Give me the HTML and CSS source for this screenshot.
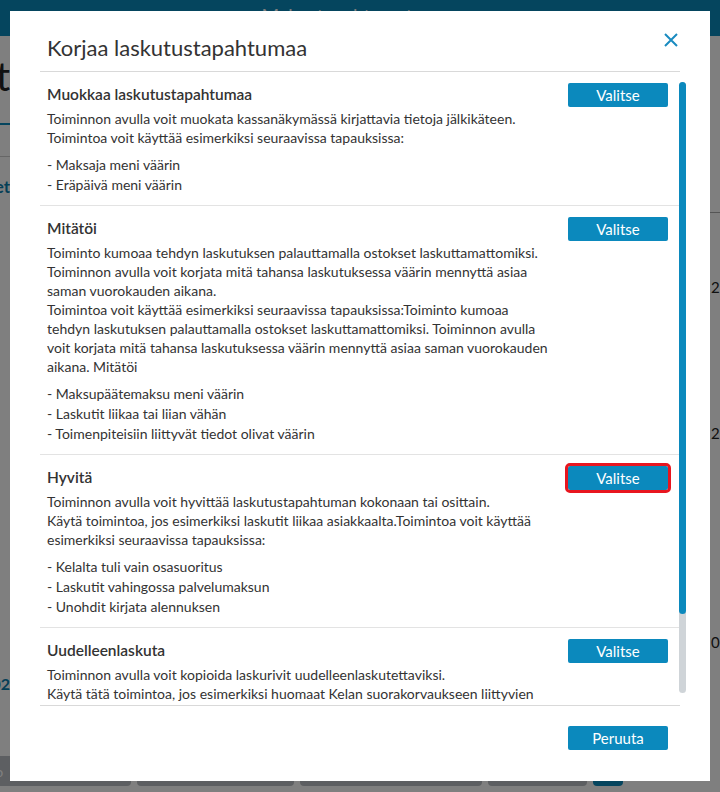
FILE: index.html
```html
<!DOCTYPE html>
<html lang="fi">
<head>
    <meta charset="UTF-8">
    <meta name="viewport" content="width=device-width, initial-scale=1.0">
    <title>Maksutapahtumat</title>
    <link rel="stylesheet" href="styles.css">
</head>
<body>
    <div class="app">
        <header class="topbar">
            <span class="topbar-title">Maksutapahtumat</span>
        </header>

        <div class="page">
            <div class="page-left">
                <div class="page-title">Laskut</div>
                <div class="tabs"></div>
                <div class="table-head"></div>
                <div class="group-title">Tuotteet</div>
                <div class="cell-link">2002</div>
            </div>
            <div class="page-center"></div>
            <div class="page-right">
                <div class="amount-head"></div>
                <div class="amount first">2.00</div>
                <div class="amount">2.00</div>
                <div class="amount last">0.00</div>
            </div>
        </div>

        <div class="toolbar">
            <button class="tool-btn w1">Tulosta kopio</button>
            <button class="tool-btn w2">Lähetä</button>
            <button class="tool-btn w3">Korjaa</button>
            <button class="tool-btn w4">Tulosta</button>
            <button class="tool-btn primary">OK</button>
        </div>
    </div>

    <div class="backdrop">
        <div class="modal">
            <div class="modal-header">
                <h2>Korjaa laskutustapahtumaa</h2>
                <button class="close" aria-label="Sulje">
                    <svg width="14" height="14" viewBox="0 0 14 14">
                        <path d="M1 1 L13 13 M13 1 L1 13" stroke="#1a8bc0" stroke-width="2" fill="none"/>
                    </svg>
                </button>
            </div>

            <div class="modal-body">
                <div class="scroll-content">
                    <div class="option">
                        <button class="btn">Valitse</button>
                        <h3>Muokkaa laskutustapahtumaa</h3>
                        <p>Toiminnon avulla voit muokata kassanäkymässä kirjattavia tietoja jälkikäteen.<br>
                        Toimintoa voit käyttää esimerkiksi seuraavissa tapauksissa:</p>
                        <ul>
                            <li>- Maksaja meni väärin</li>
                            <li>- Eräpäivä meni väärin</li>
                        </ul>
                    </div>

                    <div class="option">
                        <button class="btn">Valitse</button>
                        <h3>Mitätöi</h3>
                        <p>Toiminto kumoaa tehdyn laskutuksen palauttamalla ostokset laskuttamattomiksi.<br>
                        Toiminnon avulla voit korjata mitä tahansa laskutuksessa väärin mennyttä asiaa<br>
                        saman vuorokauden aikana.<br>
                        Toimintoa voit käyttää esimerkiksi seuraavissa tapauksissa:Toiminto kumoaa<br>
                        tehdyn laskutuksen palauttamalla ostokset laskuttamattomiksi. Toiminnon avulla<br>
                        voit korjata mitä tahansa laskutuksessa väärin mennyttä asiaa saman vuorokauden<br>
                        aikana. Mitätöi</p>
                        <ul>
                            <li>- Maksupäätemaksu meni väärin</li>
                            <li>- Laskutit liikaa tai liian vähän</li>
                            <li>- Toimenpiteisiin liittyvät tiedot olivat väärin</li>
                        </ul>
                    </div>

                    <div class="option">
                        <button class="btn highlight">Valitse</button>
                        <h3>Hyvitä</h3>
                        <p>Toiminnon avulla voit hyvittää laskutustapahtuman kokonaan tai osittain.<br>
                        Käytä toimintoa, jos esimerkiksi laskutit liikaa asiakkaalta.Toimintoa voit käyttää<br>
                        esimerkiksi seuraavissa tapauksissa:</p>
                        <ul>
                            <li>- Kelalta tuli vain osasuoritus</li>
                            <li>- Laskutit vahingossa palvelumaksun</li>
                            <li>- Unohdit kirjata alennuksen</li>
                        </ul>
                    </div>

                    <div class="option">
                        <button class="btn">Valitse</button>
                        <h3>Uudelleenlaskuta</h3>
                        <p>Toiminnon avulla voit kopioida laskurivit uudelleenlaskutettaviksi.<br>
                        Käytä tätä toimintoa, jos esimerkiksi huomaat Kelan suorakorvaukseen liittyvien<br>
                        tietojen olleen virheellisiä laskutuksen jälkeen.</p>
                        <ul>
                            <li>- Kela-korvaus jäi saamatta</li>
                            <li>- Laskutit väärää maksajaa</li>
                            <li>- Ostokset piti jakaa usealle laskulle</li>
                        </ul>
                    </div>
                </div>
                <div class="scrollbar">
                    <div class="scrollbar-thumb"></div>
                </div>
            </div>

            <div class="modal-footer">
                <button class="btn">Peruuta</button>
            </div>
        </div>
    </div>
</body>
</html>
```

FILE: styles.css
```css
body {
    font-family: Lato, "Open Sans", sans-serif;
    background-color: #fff;
    color: #333;
    margin: 0;
    padding: 0;
    overflow: hidden;
}

button {
    font-family: inherit;
}

/* page behind the dialog */

.app {
    height: 792px;
    display: flex;
    flex-direction: column;
}

.topbar {
    background-color: #0b8abd;
    height: 36px;
    display: flex;
    justify-content: center;
    overflow: hidden;
}

.topbar-title {
    color: #fff;
    font-size: 19px;
    line-height: 31px;
    margin-right: 46px;
}

.page {
    flex: 1;
    display: flex;
}

.page-left,
.page-right {
    width: 10px;
    overflow: hidden;
}

.page-center {
    flex: 1;
}

.page-left > div {
    display: flex;
    justify-content: flex-end;
    white-space: nowrap;
}

.page-title {
    font-size: 40px;
    height: 60px;
    padding-top: 20px;
    line-height: 40px;
    color: #222;
}

.tabs {
    height: 7px;
    border-bottom: 2px solid #0b8abd;
}

.table-head {
    height: 31px;
    border-bottom: 1px solid #ccc;
}

.group-title {
    margin-top: 19px;
    font-weight: bold;
    color: #0b7fae;
    font-size: 17px;
    line-height: 22px;
}

.cell-link {
    margin-top: 476px;
    font-weight: bold;
    color: #0b7fae;
    font-size: 16px;
}

.amount-head {
    height: 176px;
    border-bottom: 1px solid #aaa;
}

.amount {
    white-space: nowrap;
    font-size: 15px;
    line-height: 18px;
    padding-left: 1px;
    color: #222;
}

.amount.first {
    margin-top: 65px;
}

.amount + .amount {
    margin-top: 128px;
}

.amount.last {
    margin-top: 191px;
}

.toolbar {
    height: 36px;
    display: flex;
    gap: 6px;
}

.tool-btn {
    height: 30px;
    border: 0;
    border-radius: 0 0 4px 4px;
    background-color: #bbbfc4;
    color: #fff;
    font-size: 14px;
    text-align: left;
    padding: 0 0 0 12px;
    overflow: hidden;
    white-space: nowrap;
}

.w1 {
    width: 231px;
    margin-left: -100px;
    padding-left: 22px;
}

.w2 { width: 157px; }
.w3 { width: 182px; }
.w4 { width: 99px; }

.tool-btn.primary {
    width: 30px;
    background-color: #0b8abd;
    padding: 0;
    text-align: center;
}

/* dialog */

.backdrop {
    position: fixed;
    top: 0;
    left: 0;
    right: 0;
    bottom: 0;
    background-color: rgba(0, 0, 0, 0.5);
    padding: 11px 10px;
}

.modal {
    background-color: #fff;
    height: 770px;
    display: flex;
    flex-direction: column;
}

.modal-header {
    margin: 0 30px;
    padding: 21px 0 7px 7px;
    border-bottom: 1px solid #d9d9d9;
    display: flex;
    justify-content: space-between;
}

.modal-header h2 {
    margin: 0;
    font-size: 22px;
    font-weight: normal;
    line-height: 32px;
    color: #333;
}

.close {
    background: none;
    border: 0;
    padding: 0;
    margin: 1px 2px 0 0;
    width: 14px;
    height: 14px;
}

.modal-body {
    flex: 1;
    min-height: 0;
    margin: 0 24px 0 30px;
    display: flex;
}

.scroll-content {
    flex: 1;
    overflow: hidden;
}

.scrollbar {
    width: 7px;
    margin: 10px 0 12px;
    background-color: #cfd4d8;
    border-radius: 4px;
}

.scrollbar-thumb {
    height: 532px;
    background-color: #0b89bd;
    border-radius: 4px;
}

.option {
    padding: 11px 11px 10px 7px;
    border-bottom: 1px solid #e3e3e3;
}

.option:last-child {
    border-bottom: 0;
}

.option h3 {
    margin: 0 0 4px;
    font-size: 15.5px;
    font-weight: 600;
    line-height: 22px;
    color: #333;
}

.option p {
    margin: 0 0 8px;
    font-size: 14px;
    line-height: 19px;
    white-space: nowrap;
}

.option ul {
    list-style: none;
    margin: 0;
    padding: 0;
    font-size: 14px;
    line-height: 20px;
}

.btn {
    background-color: #0b89bd;
    color: #fff;
    border: 0;
    border-radius: 2px;
    width: 100px;
    height: 24px;
    font-size: 15px;
    padding: 0;
}

.option .btn {
    float: right;
}

.btn.highlight {
    outline: 3px solid #e8161f;
}

.modal-footer {
    margin: 0 30px;
    border-top: 1px solid #d9d9d9;
    padding: 20px 12px 0 0;
    height: 55px;
    display: flex;
    justify-content: flex-end;
    align-items: flex-start;
}
```
